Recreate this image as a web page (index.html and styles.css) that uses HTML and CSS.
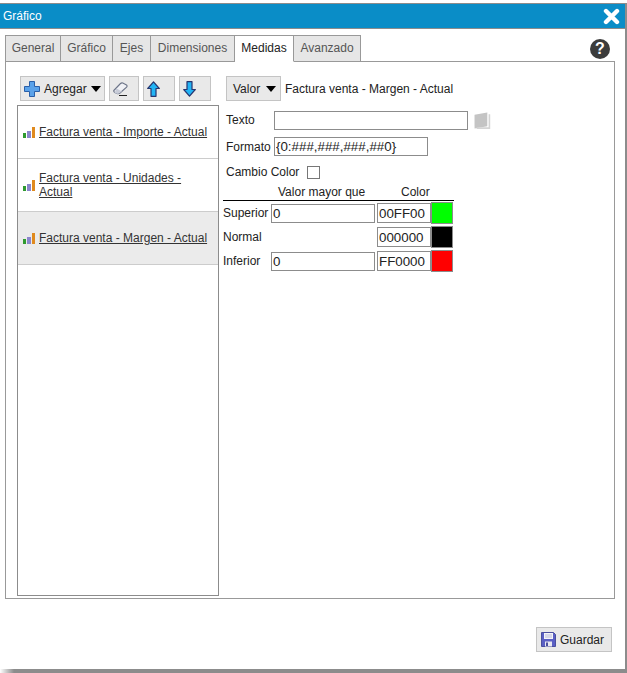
FILE: index.html
```html
<!DOCTYPE html>
<html lang="es">
<head>
<meta charset="utf-8">
<title>Gráfico</title>
<link rel="stylesheet" href="styles.css">
</head>
<body>
<div class="window">
  <header class="titlebar">
    <span class="title">Gráfico</span>
    <svg class="close" width="17" height="17" viewBox="0 0 17 17"><path d="M3 3 L14 14 M14 3 L3 14" stroke="#fff" stroke-width="4.4" stroke-linecap="round"/></svg>
  </header>
  <div class="content">
    <div class="tabrow">
      <nav class="tabs">
        <span class="tab t1">General</span>
        <span class="tab t2">Gráfico</span>
        <span class="tab t3">Ejes</span>
        <span class="tab t4">Dimensiones</span>
        <span class="tab t5 active">Medidas</span>
        <span class="tab t6">Avanzado</span>
      </nav>
      <span class="help">?</span>
    </div>
    <section class="panel">
      <div class="left">
        <div class="toolbar">
          <button class="btn add">
            <svg width="16" height="16" viewBox="0 0 16 16"><path d="M5.500 .5h5v5h5v5h-5v5h-5v-5h-5v-5h5z" fill="#5aa2ea" stroke="#2a5fa8" stroke-width="1"/></svg>
            <span class="addlabel">Agregar</span><i class="caret"></i>
          </button>
          <button class="btn erase">
            <svg width="15" height="14" viewBox="0 0 15 14"><path d="M.8 8.500 L7.500 1.500 Q8.500 .6 9.800 1 L13.500 3 Q14.600 4 13.600 5.200 L7 11 Q5.800 12 4 11.500 L1.800 10.500 Q.4 9.700 .8 8.500Z" fill="#f0f1f5" stroke="#6c7488" stroke-width="1.100"/><path d="M1.500 11 L5 12 L9 9.500 L3.500 6.500Z" fill="#c8ccd8"/><path d="M6 13.500H14" stroke="#222" stroke-width="1"/></svg>
          </button>
          <button class="btn up">
            <svg width="13" height="16" viewBox="0 0 13 16"><path d="M6.500 .8 L12.300 7.500 H9 V15.300 H4 V7.500 H.7Z" fill="#22b4f5" stroke="#27356f" stroke-width="1.200" stroke-linejoin="round"/></svg>
          </button>
          <button class="btn down">
            <svg width="13" height="16" viewBox="0 0 13 16"><path d="M6.500 15.200 L12.300 8.500 H9 V.7 H4 V8.500 H.7Z" fill="#22b4f5" stroke="#27356f" stroke-width="1.200" stroke-linejoin="round"/></svg>
          </button>
        </div>
        <ul class="list">
          <li class="item">
            <svg class="bars" width="12" height="11" viewBox="0 0 12 11"><rect x="0" y="6" width="3" height="5" fill="#2f9a2f"/><rect x="4" y="4" width="4" height="7" fill="#8a86cc"/><rect x="9" y="0" width="3" height="11" fill="#e08a1e"/></svg>
            <a class="link">Factura venta - Importe - Actual</a>
          </li>
          <li class="item">
            <svg class="bars" width="12" height="11" viewBox="0 0 12 11"><rect x="0" y="6" width="3" height="5" fill="#2f9a2f"/><rect x="4" y="4" width="4" height="7" fill="#8a86cc"/><rect x="9" y="0" width="3" height="11" fill="#e08a1e"/></svg>
            <a class="link">Factura venta - Unidades - Actual</a>
          </li>
          <li class="item selected">
            <svg class="bars" width="12" height="11" viewBox="0 0 12 11"><rect x="0" y="6" width="3" height="5" fill="#2f9a2f"/><rect x="4" y="4" width="4" height="7" fill="#8a86cc"/><rect x="9" y="0" width="3" height="11" fill="#e08a1e"/></svg>
            <a class="link">Factura venta - Margen - Actual</a>
          </li>
        </ul>
      </div>
      <div class="right">
        <div class="valuerow">
          <button class="btn valor"><span>Valor</span><i class="caret"></i></button>
          <span class="measure">Factura venta - Margen - Actual</span>
        </div>
        <div class="field texto">
          <label class="lbl up1">Texto</label>
          <input class="inp wide" type="text">
          <svg class="book" width="17" height="17" viewBox="0 0 15 16"><path d="M0 2.500 L12 .5 V13.500 L0 15.500Z" fill="#c4c4c4"/><path d="M14 2V15.200H2" fill="none" stroke="#d4d4d4" stroke-width="1.500"/></svg>
        </div>
        <div class="field formato">
          <label class="lbl">Formato</label>
          <input class="inp fmt" type="text" value="{0:###,###,###,##0}">
        </div>
        <div class="field cambio">
          <label class="lbl2 up1">Cambio Color</label>
          <span class="check"></span>
        </div>
        <div class="thead">
          <span class="th1">Valor mayor que</span>
          <span class="th2">Color</span>
        </div>
        <div class="row r1">
          <span class="rowlbl">Superior</span>
          <input class="inp val" type="text" value="0">
          <input class="inp col" type="text" value="00FF00">
          <span class="swatch green"></span>
        </div>
        <div class="row r2">
          <span class="rowlbl">Normal</span>
          <span class="val-empty"></span>
          <input class="inp col" type="text" value="000000">
          <span class="swatch black"></span>
        </div>
        <div class="row r3">
          <span class="rowlbl">Inferior</span>
          <input class="inp val" type="text" value="0">
          <input class="inp col" type="text" value="FF0000">
          <span class="swatch red"></span>
        </div>
      </div>
    </section>
    <footer class="actions">
      <button class="btn save">
        <svg width="15" height="15" viewBox="0 0 15 15"><path d="M.5 .5H12.500L14.500 2.500V14.500H.5Z" fill="#5a5fc4" stroke="#4a4f9e" stroke-width="1"/><rect x="3" y="1" width="9" height="6" fill="#f4f4f8"/><path d="M4 3h7M4 5h7" stroke="#b8bad8" stroke-width="1"/><rect x="4" y="9.500" width="7" height="5" fill="#e8e8f0"/><rect x="5" y="10.500" width="2" height="3.500" fill="#4a4f9e"/></svg>
        <span>Guardar</span>
      </button>
    </footer>
  </div>
  <div class="shadow"></div>
</div>
</body>
</html>
```

FILE: styles.css
```css
* { box-sizing: border-box; }
html, body { margin: 0; padding: 0; background: #fff; }
body { font: 12px "Liberation Sans", Arial, sans-serif; color: #222; overflow: hidden; }
.window { width: 627px; height: 673px; padding-top: 3px; display: flex; flex-direction: column; }
.titlebar { height: 26px; flex: none; background: #0a8dc7; border-top: 1px solid #8c8c8c; border-bottom: 1px solid #8c8c8c; border-right: 2px solid #8c8c8c; display: flex; align-items: center; justify-content: space-between; padding: 0 5px 0 3px; }
.title { color: #fff; }
.close { display: block; margin-top: 1px; }
.content { flex: 1; border-right: 2px solid #8c8c8c; padding: 6px 0 0 5px; display: flex; flex-direction: column; min-height: 0; }
.tabrow { height: 27px; flex: none; display: flex; justify-content: space-between; width: 605px; position: relative; z-index: 1; }
.tabs { display: flex; }
.tab { height: 27px; border: 1px solid #999; border-left-width: 0; border-bottom: 1px solid #999; background: #e6e6e6; color: #555; display: flex; align-items: center; justify-content: center; padding-bottom: 1px; }
.t1 { width: 56px; border-left-width: 1px; }
.t2 { width: 52px; }
.t3 { width: 38px; }
.t4 { width: 84px; }
.t5 { width: 59px; }
.t6 { width: 67px; }
.tab.active { background: #fff; color: #222; border-bottom-color: #fff; }
.help { width: 20px; height: 20px; margin-top: 4px; border-radius: 50%; background: #3c3c3c; color: #fff; font: bold 16px/20px "Liberation Sans", Arial, sans-serif; text-align: center; }
.panel { width: 610px; height: 538px; flex: none; margin-top: -1px; border: 1px solid #999; display: flex; }
.left { width: 206px; padding: 14px 0 0 11px; flex: none; display: flex; flex-direction: column; }
.toolbar { display: flex; height: 25px; margin-left: 3px; gap: 4px; flex: none; }
.btn { height: 25px; border: 1px solid #c4c4c4; background: #e9e9e9; padding: 0 0 0 3px; margin: 0; font: inherit; color: #222; display: flex; align-items: center; justify-content: flex-start; }
.add { width: 85px; }
.addlabel { margin-left: 4px; }
.erase { width: 30px; }
.up { width: 32px; }
.down { width: 32px; }
.caret { width: 0; height: 0; border-left: 5.5px solid transparent; border-right: 5.5px solid transparent; border-top: 6px solid #000; margin-left: 4px; }
.valor { width: 55px; padding-left: 6px; }
.valor .caret { margin-left: 6px; }
.list { list-style: none; margin: 4px 0 0; padding: 0; width: 202px; height: 491px; border: 1px solid #8c8c8c; flex: none; }
.item { height: 53px; border-bottom: 1px solid #ccc; display: flex; align-items: center; padding-left: 5px; gap: 4px; }
.selected { background: #ebebeb; }
.bars { flex: none; }
.link { text-decoration: underline; color: #333; line-height: 14px; width: 172px; }
.right { flex: 1; padding: 14px 0 0 11px; position: relative; }
.valuerow { display: flex; align-items: center; gap: 4px; height: 25px; margin-left: 3px; }
.measure { color: #222; }
.field { display: flex; align-items: center; margin-left: 3px; }
.texto { height: 19px; margin-top: 10px; }
.formato { height: 19px; margin-top: 7px; }
.cambio { height: 13px; margin-top: 10px; }
.lbl { width: 48px; }
.lbl2 { width: 81px; }
.up1 { padding-bottom: 2px; }
.inp { height: 19px; border: 1px solid #8c8c8c; padding: 0 1px; margin: 0; font: 13.333px "Liberation Sans", Arial, sans-serif; color: #222; background: #fff; outline: 0; display: block; }
.wide { width: 194px; }
.fmt { width: 154px; }
.book { margin-left: 6px; }
.check { width: 13px; height: 13px; border: 1px solid #777; display: block; }
.thead { width: 231px; height: 15px; margin-top: 7px; border-bottom: 1px solid #000; display: flex; }
.th1 { margin-left: 55px; width: 123px; }
.th2 { width: 40px; }
.thead span { line-height: 13px; }
.row { display: flex; align-items: center; width: 231px; height: 22px; margin-top: 2px; }
.r1 { margin-top: 1px; }
.rowlbl { width: 48px; flex: none; }
.val { width: 104px; margin-right: 2px; }
.val-empty { width: 106px; flex: none; }
.col { width: 54px; height: 20px; }
.swatch { width: 22px; height: 22px; border: 1px solid #8c8c8c; display: block; }
.green { background: #00ff00; }
.black { background: #000; }
.red { background: #ff0000; }
.actions { width: 607px; height: 25px; margin-top: 28px; display: flex; justify-content: flex-end; flex: none; }
.save { width: 76px; padding-left: 4px; gap: 4px; }
.shadow { height: 4px; flex: none; margin-top: auto; background: linear-gradient(to right, #fff 0, #8c8c8c 14px); }
```
